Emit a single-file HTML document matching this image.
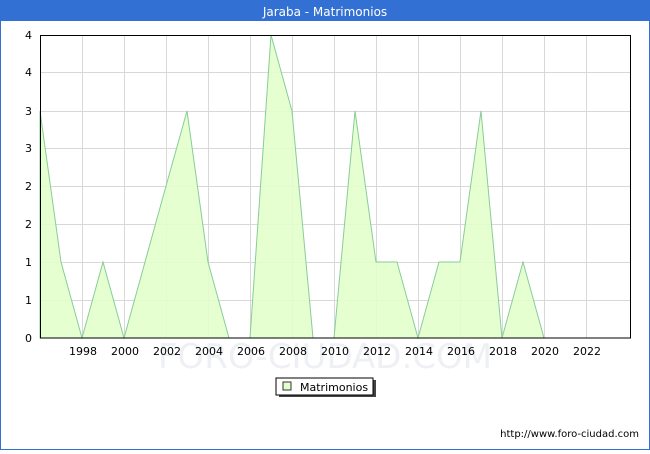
<!DOCTYPE html>
<html><head><meta charset="utf-8"><style>
body{margin:0;width:650px;height:450px;overflow:hidden;font-family:"DejaVu Sans","Liberation Sans",sans-serif;}
</style></head><body>
<svg width="650" height="450" xmlns="http://www.w3.org/2000/svg" font-family="DejaVu Sans, Liberation Sans, sans-serif">
<rect x="0" y="0" width="650" height="450" fill="#3370d4"/>
<rect x="1" y="21" width="648" height="428" fill="#fff"/>
<text x="325" y="16" fill="#fff" font-size="12" text-anchor="middle">Jaraba - Matrimonios</text>
<text x="325" y="368" fill="#eef0f5" font-size="34" text-anchor="middle">FORO-CIUDAD.COM</text>
<g stroke="#d8d8d8" stroke-width="1">
<line x1="82.5" y1="35" x2="82.5" y2="338"/><line x1="124.5" y1="35" x2="124.5" y2="338"/><line x1="166.5" y1="35" x2="166.5" y2="338"/><line x1="208.5" y1="35" x2="208.5" y2="338"/><line x1="250.5" y1="35" x2="250.5" y2="338"/><line x1="292.5" y1="35" x2="292.5" y2="338"/><line x1="334.5" y1="35" x2="334.5" y2="338"/><line x1="376.5" y1="35" x2="376.5" y2="338"/><line x1="418.5" y1="35" x2="418.5" y2="338"/><line x1="460.5" y1="35" x2="460.5" y2="338"/><line x1="502.5" y1="35" x2="502.5" y2="338"/><line x1="544.5" y1="35" x2="544.5" y2="338"/><line x1="586.5" y1="35" x2="586.5" y2="338"/>
<line x1="40" y1="72.5" x2="630" y2="72.5"/><line x1="40" y1="111.5" x2="630" y2="111.5"/><line x1="40" y1="148.5" x2="630" y2="148.5"/><line x1="40" y1="186.5" x2="630" y2="186.5"/><line x1="40" y1="224.5" x2="630" y2="224.5"/><line x1="40" y1="262.5" x2="630" y2="262.5"/><line x1="40" y1="300.5" x2="630" y2="300.5"/>
</g>
<polygon fill="#e2ffcc" fill-opacity="0.9" stroke="#88cc99" stroke-width="1" points="40,338 40,111 61,262 82,338 103,262 124,338 145,262 166,186 187,111 208,262 229,338 250,338 271,35 292,111 313,338 334,338 355,111 376,262 397,262 418,338 439,262 460,262 481,111 502,338 523,262 544,338"/>
<rect x="40.5" y="35.5" width="590" height="302.5" fill="none" stroke="#000" stroke-width="1"/>
<g font-size="11" fill="#000" text-anchor="end">
<text x="32" y="39">4</text><text x="32" y="76">4</text><text x="32" y="115">3</text><text x="32" y="152">3</text><text x="32" y="190">2</text><text x="32" y="228">2</text><text x="32" y="266">1</text><text x="32" y="304">1</text><text x="32" y="342">0</text>
</g>
<g font-size="11" fill="#000" text-anchor="middle">
<text x="83" y="355">1998</text><text x="125" y="355">2000</text><text x="167" y="355">2002</text><text x="209" y="355">2004</text><text x="251" y="355">2006</text><text x="293" y="355">2008</text><text x="335" y="355">2010</text><text x="377" y="355">2012</text><text x="419" y="355">2014</text><text x="461" y="355">2016</text><text x="503" y="355">2018</text><text x="545" y="355">2020</text><text x="587" y="355">2022</text>
</g>
<rect x="279" y="380" width="97" height="17" fill="#444"/>
<rect x="276" y="378" width="97" height="17" fill="#fff" stroke="#000" stroke-width="1"/>
<rect x="283" y="382" width="8" height="8" fill="#e2ffcc" stroke="#333"/>
<text x="300" y="391" font-size="11">Matrimonios</text>
<text x="639" y="437" font-size="10" text-anchor="end">http://www.foro-ciudad.com</text>
</svg>
</body></html>
